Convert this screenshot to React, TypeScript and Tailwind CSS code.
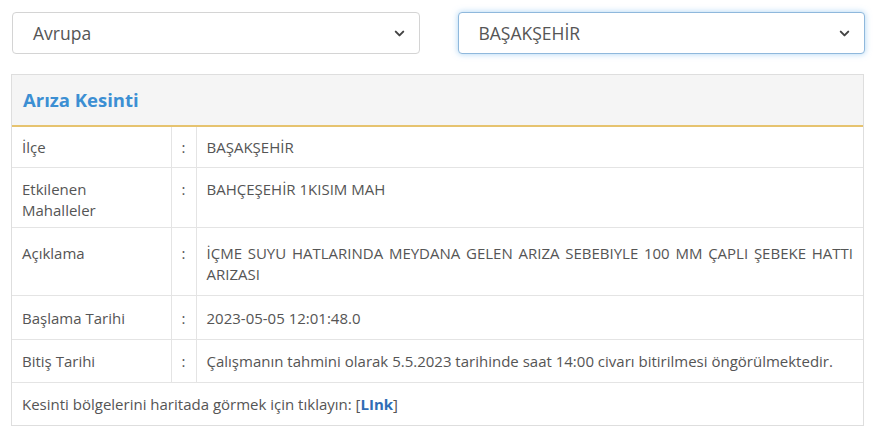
import { ChevronDown } from "lucide-react";

const rows: { label: React.ReactNode; value: string; pad: string }[] = [
  { label: "İlçe", value: "BAŞAKŞEHİR", pad: "pt-[10px] pb-[9px]" },
  {
    label: (
      <>
        Etkilenen
        <br />
        Mahalleler
      </>
    ),
    value: "BAHÇEŞEHİR 1KISIM MAH",
    pad: "pt-[11px] pb-[6px]",
  },
  {
    label: "Açıklama",
    value:
      "İÇME SUYU HATLARINDA MEYDANA GELEN ARIZA SEBEBIYLE 100 MM ÇAPLI ŞEBEKE HATTI ARIZASI",
    pad: "pt-[15px] pb-[10px]",
  },
  { label: "Başlama Tarihi", value: "2023-05-05 12:01:48.0", pad: "pt-[12px] pb-[10px]" },
  {
    label: "Bitiş Tarihi",
    value:
      "Çalışmanın tahmini olarak 5.5.2023 tarihinde saat 14:00 civarı bitirilmesi öngörülmektedir.",
    pad: "pt-[10.5px] pb-[10.5px]",
  },
];

function Select({ value, focused }: { value: string; focused?: boolean }) {
  return (
    <div
      className={`flex h-[42px] flex-1 items-center justify-between rounded-[4px] border bg-white pl-[20px] pr-[12px] text-[17.5px] text-[#555] ${
        focused
          ? "border-[#8fb8dc] shadow-[0_0_6px_rgba(102,175,233,0.55)]"
          : "border-[#d4d4d4]"
      }`}
    >
      <span>{value}</span>
      <ChevronDown className="h-[15px] w-[15px] text-[#444]" strokeWidth={3.2} />
    </div>
  );
}

export default function App() {
  return (
    <div className="h-[428px] w-[880px] bg-white px-[11px] pt-[12px] font-['Open_Sans',sans-serif] text-[15px] text-[#555]">
      <div className="flex gap-[38px] pl-px pr-[4px]">
        <Select value="Avrupa" />
        <Select value="BAŞAKŞEHİR" focused />
      </div>

      <div className="mt-[20px] mr-[5px] border border-[#dedede]">
        <div className="flex h-[52px] items-center border-b-2 border-[#e6c36f] bg-[#f5f5f5] px-[11px]">
          <h2 className="text-[18.5px] font-bold text-[#3c8fd3]">Arıza Kesinti</h2>
        </div>
        <table className="w-full border-collapse leading-[21px]">
          <tbody>
            {rows.map((r, i) => (
              <tr key={i} className="border-b border-[#e4e4e4]">
                <td className={`w-[159px] border-r border-[#e4e4e4] px-[10px] align-top ${r.pad}`}>
                  {r.label}
                </td>
                <td className={`w-[25px] border-r border-[#e4e4e4] text-center align-top ${r.pad}`}>
                  :
                </td>
                <td className={`px-[10px] text-justify align-top ${r.pad}`}>{r.value}</td>
              </tr>
            ))}
            <tr>
              <td colSpan={3} className="px-[10px] pt-[11px] pb-[10px]">
                Kesinti bölgelerini haritada görmek için tıklayın: [
                <a className="font-bold text-[#2f6db5]">LInk</a>]
              </td>
            </tr>
          </tbody>
        </table>
      </div>
    </div>
  );
}
